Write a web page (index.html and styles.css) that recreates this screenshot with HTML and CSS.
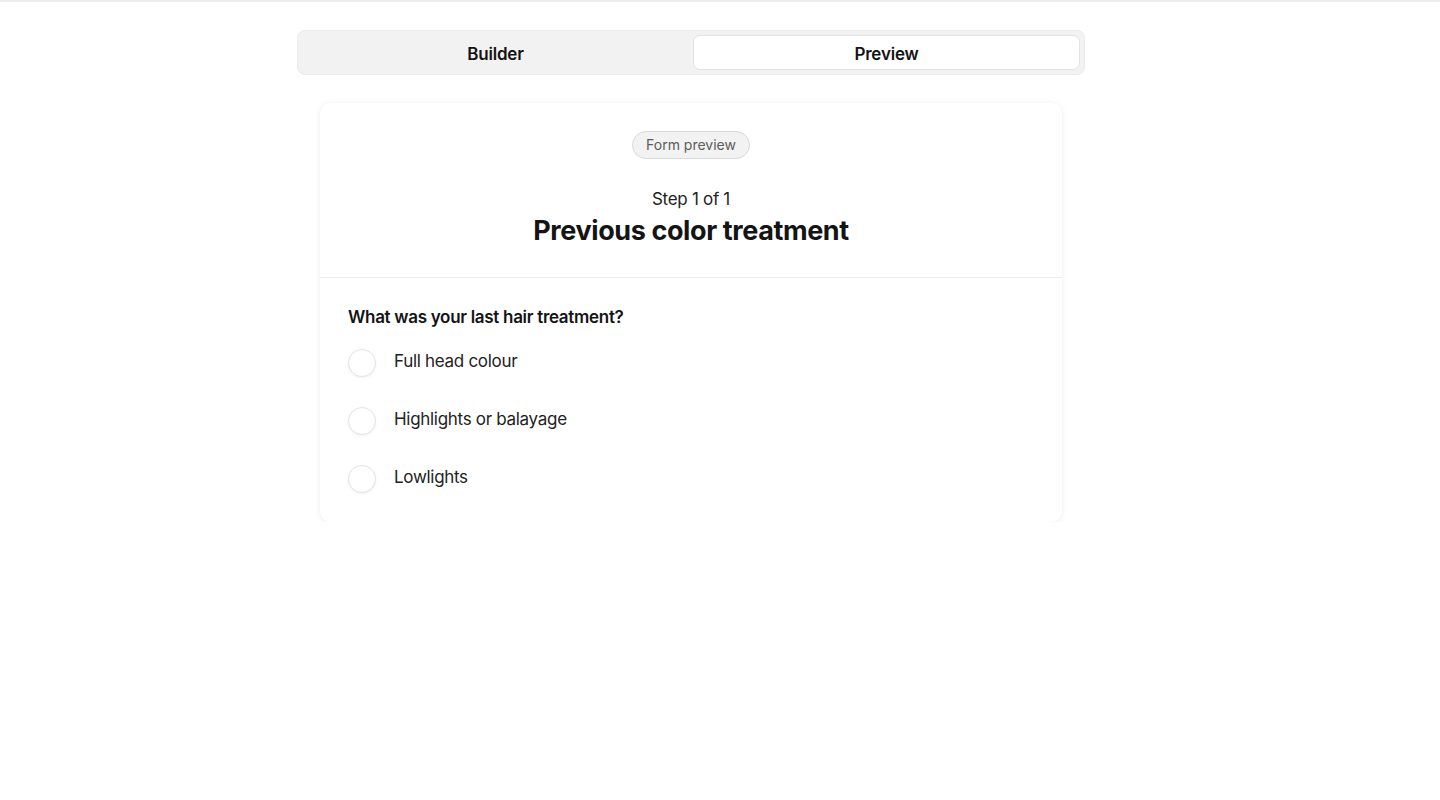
FILE: index.html
```html
<!DOCTYPE html>
<html lang="en">
<head>
<meta charset="utf-8">
<title>Form preview</title>
<link rel="stylesheet" href="styles.css">
</head>
<body>
<div class="topline"></div>
<main class="wrap">
  <nav class="tabs">
    <button class="tab">Builder</button>
    <button class="tab active">Preview</button>
  </nav>
  <section class="card">
    <header class="card-head">
      <span class="pill">Form preview</span>
      <div class="step">Step 1 of 1</div>
      <h1 class="title">Previous color treatment</h1>
    </header>
    <div class="card-body">
      <h2 class="question">What was your last hair treatment?</h2>
      <ul class="options">
        <li class="option"><span class="radio"></span><span class="label">Full head colour</span></li>
        <li class="option"><span class="radio"></span><span class="label">Highlights or balayage</span></li>
        <li class="option"><span class="radio"></span><span class="label">Lowlights</span></li>
      </ul>
    </div>
  </section>
</main>
</body>
</html>
```
FILE: styles.css
```css
* { box-sizing: border-box; }
html, body { margin: 0; padding: 0; background: #fff; }
body {
  font-family: Inter, "Liberation Sans", sans-serif;
  color: #141414;
}
.topline { height: 2px; background: #ececec; }
.wrap {
  width: 788px;
  margin-left: 297px;
  padding-top: 28px;
}
.tabs {
  display: grid;
  grid-template-columns: 1fr 1fr;
  gap: 4px;
  padding: 4px;
  background: #f2f2f2;
  border: 1px solid #ebebeb;
  border-radius: 8px;
  height: 45px;
}
.tab {
  font-family: inherit;
  font-size: 17px;
  font-weight: 600;
  letter-spacing: -0.2px;
  color: #141414;
  background: transparent;
  border: 1px solid transparent;
  border-radius: 7px;
  padding: 2px 0 0;
  height: 35px;
}
.tab.active {
  background: #fff;
  border-color: #e2e2e2;
}
.card {
  width: 742px;
  margin: 28px auto 0;
  background: #fff;
  border-radius: 10px;
  box-shadow: 0 1px 6px rgba(0,0,0,0.07), 0 0 1px rgba(0,0,0,0.05);
}
.card-head {
  display: flex;
  flex-direction: column;
  align-items: center;
  padding: 28px 0 28px;
  border-bottom: 1px solid #ececec;
}
.pill {
  font-size: 14px;
  color: #5c5c5c;
  background: #f2f2f2;
  border: 1px solid #d9d9d9;
  border-radius: 14px;
  padding: 4px 13px;
  line-height: 18px;
}
.step {
  margin-top: 28px;
  font-size: 17px;
  letter-spacing: -0.3px;
  color: #222;
  line-height: 24px;
}
.title {
  margin: 2px 0 0;
  font-size: 27px;
  font-weight: 700;
  line-height: 36px;
  letter-spacing: -0.4px;
}
.card-body {
  padding: 27px 28px 29px;
}
.question {
  margin: 0;
  font-size: 17px;
  font-weight: 600;
  letter-spacing: -0.3px;
  line-height: 24px;
}
.options {
  list-style: none;
  margin: 0;
  padding: 0;
  display: flex;
  flex-direction: column;
  gap: 30px;
  margin-top: 20px;
}
.option {
  display: flex;
  align-items: center;
  gap: 18px;
  height: 28px;
}
.radio {
  width: 28px;
  height: 28px;
  border-radius: 50%;
  border: 1px solid #e4e4e4;
  background: #fff;
  box-shadow: 0 1px 3px rgba(0,0,0,0.06);
  flex: none;
}
.label {
  font-size: 17px;
  letter-spacing: -0.3px;
  color: #222;
  margin-top: -4px;
}
```
